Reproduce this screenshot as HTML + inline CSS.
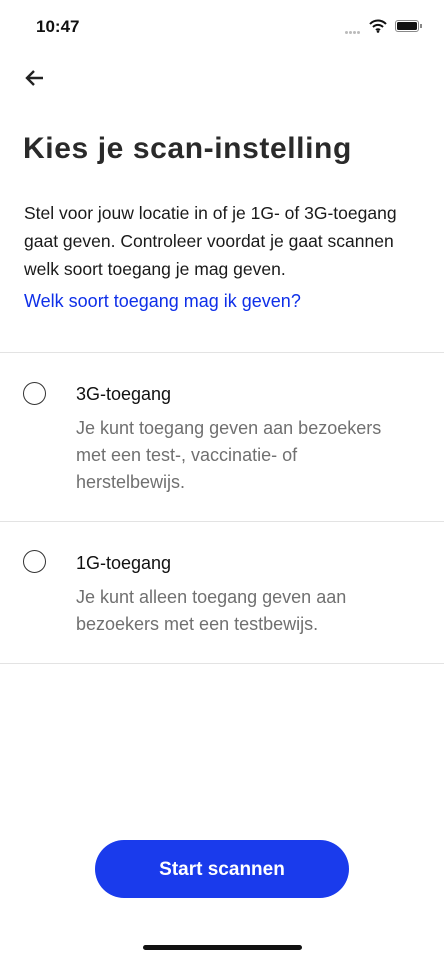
<!DOCTYPE html>
<html><head><meta charset="utf-8"><style>
body{margin:0;width:444px;height:960px;background:#fff;font-family:"Liberation Sans",sans-serif;position:relative;overflow:hidden;color:#1f1f1f}
.a{position:absolute;white-space:nowrap}
.hr{position:absolute;left:0;width:444px;height:1px;background:#e3e3e3}
.radio{position:absolute;left:23px;width:23px;height:23px;border:1.3px solid #333;border-radius:50%;box-sizing:border-box}
.t{font-size:18px;color:#111}
.d{font-size:18px;color:#707070;line-height:27px}
.dot{position:absolute;top:31px;width:3px;height:3px;border-radius:50%;background:#bbb}
</style></head><body>
<div class="a" style="left:36px;top:17px;font-size:17px;font-weight:bold;color:#111">10:47</div>
<div class="dot" style="left:345px"></div><div class="dot" style="left:349px"></div><div class="dot" style="left:353px"></div><div class="dot" style="left:357px"></div>
<svg class="a" style="left:369px;top:19px" width="18" height="14" viewBox="0 0 18 14"><path d="M1 5a11 11 0 0 1 16 0M4 8a7 7 0 0 1 10 0M7 11a3 3 0 0 1 4 0" stroke="#111" stroke-width="2" fill="none"/><circle cx="9" cy="12.5" r="1.3" fill="#111"/></svg>
<div class="a" style="left:395px;top:20px;width:24px;height:12px;border:1px solid #888;border-radius:3px;box-sizing:border-box;padding:1px"><div style="background:#111;height:100%;border-radius:1.5px"></div></div>
<div class="a" style="left:420px;top:24px;width:2px;height:4px;background:#888"></div>
<svg class="a" style="left:24px;top:69px" width="20" height="18" viewBox="0 0 20 18"><path d="M19 9H3M10 2L3 9l7 7" stroke="#222" stroke-width="2.4" fill="none"/></svg>
<div class="a" style="left:23px;top:132px;font-size:30px;font-weight:bold;color:#2a2a2a;letter-spacing:0.6px">Kies je scan-instelling</div>
<div class="a" style="left:24px;top:199px;font-size:17.5px;line-height:28px;color:#1a1a1a">Stel voor jouw locatie in of je 1G- of 3G-toegang<br>gaat geven. Controleer voordat je gaat scannen<br>welk soort toegang je mag geven.</div>
<div class="a" style="left:24px;top:291px;font-size:18px;color:#0e2fe8">Welk soort toegang mag ik geven?</div>
<div class="hr" style="top:352px"></div>
<div class="radio" style="top:382px"></div>
<div class="a t" style="left:76px;top:384px">3G-toegang</div>
<div class="a d" style="left:76px;top:415px">Je kunt toegang geven aan bezoekers<br>met een test-, vaccinatie- of<br>herstelbewijs.</div>
<div class="hr" style="top:521px"></div>
<div class="radio" style="top:550px"></div>
<div class="a t" style="left:76px;top:553px">1G-toegang</div>
<div class="a d" style="left:76px;top:584px">Je kunt alleen toegang geven aan<br>bezoekers met een testbewijs.</div>
<div class="hr" style="top:663px"></div>
<div class="a" style="left:95px;top:840px;width:254px;height:58px;border-radius:29px;background:#1a3bec;color:#fff;font-size:19px;font-weight:bold;text-align:center;line-height:60px">Start scannen</div>
<div class="a" style="left:143px;top:945px;width:159px;height:5px;border-radius:3px;background:#111"></div>
</body></html>
